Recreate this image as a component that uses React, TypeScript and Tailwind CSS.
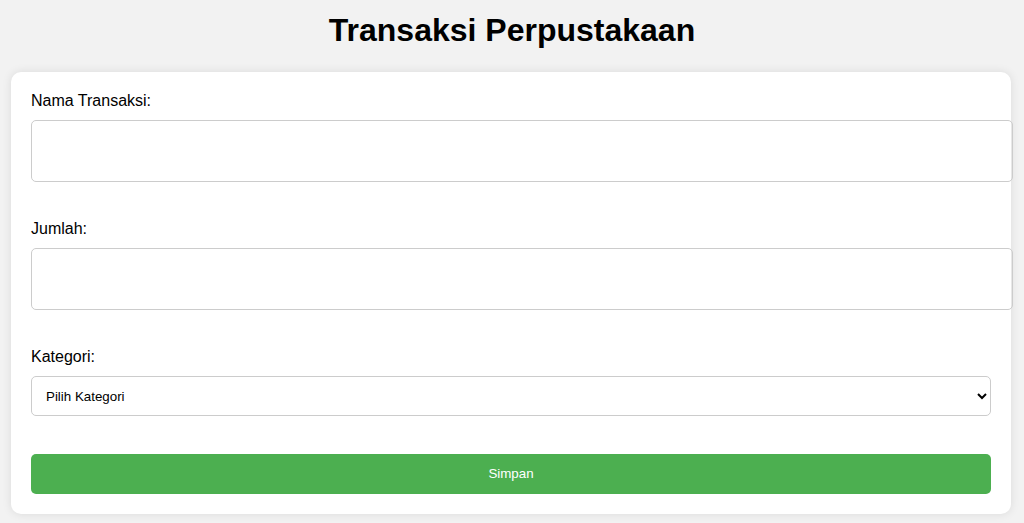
import React, { useState } from 'react';

const App: React.FC = () => {
  const [nama, setNama] = useState('');
  const [jumlah, setJumlah] = useState('');
  const [kategori, setKategori] = useState('');

  const handleSubmit = (e: React.FormEvent) => {
    e.preventDefault();
  };

  return (
    <div className="min-h-[523px] bg-[#f2f2f2] pt-[12px] font-['Liberation_Sans',Arial,sans-serif] text-black">
      <h1 className="text-center text-[32px] font-bold leading-[37px]">Transaksi Perpustakaan</h1>

      <form
        onSubmit={handleSubmit}
        className="mt-[23px] ml-[11px] w-[1000px] rounded-[10px] bg-white p-[20px] shadow-[0_0_10px_rgba(0,0,0,0.1)]"
      >
        <label htmlFor="nama" className="block text-[16px] leading-[18px]">Nama Transaksi:</label>
        <input
          id="nama"
          type="text"
          value={nama}
          onChange={(e) => setNama(e.target.value)}
          className="mt-[10px] block h-[62px] w-[982px] rounded-[5px] border border-[#cccccc] px-[10px] text-[13px]"
        />

        <label htmlFor="jumlah" className="mt-[38px] block text-[16px] leading-[18px]">Jumlah:</label>
        <input
          id="jumlah"
          type="number"
          value={jumlah}
          onChange={(e) => setJumlah(e.target.value)}
          className="mt-[10px] block h-[62px] w-[982px] rounded-[5px] border border-[#cccccc] px-[10px] text-[13px] [appearance:textfield]"
        />

        <label htmlFor="kategori" className="mt-[38px] block text-[16px] leading-[18px]">Kategori:</label>
        <select
          id="kategori"
          value={kategori}
          onChange={(e) => setKategori(e.target.value)}
          className="mt-[10px] block h-[40px] w-full rounded-[5px] border border-[#cccccc] bg-white px-[10px] text-[13.33px]"
        >
          <option value="">Pilih Kategori</option>
          <option value="pinjam">Peminjaman</option>
          <option value="kembali">Pengembalian</option>
          <option value="denda">Denda</option>
        </select>

        <button
          type="submit"
          className="mt-[38px] block h-[40px] w-full rounded-[5px] bg-[#4caf50] text-[13.33px] text-white"
        >
          Simpan
        </button>
      </form>
    </div>
  );
};

export default App;
